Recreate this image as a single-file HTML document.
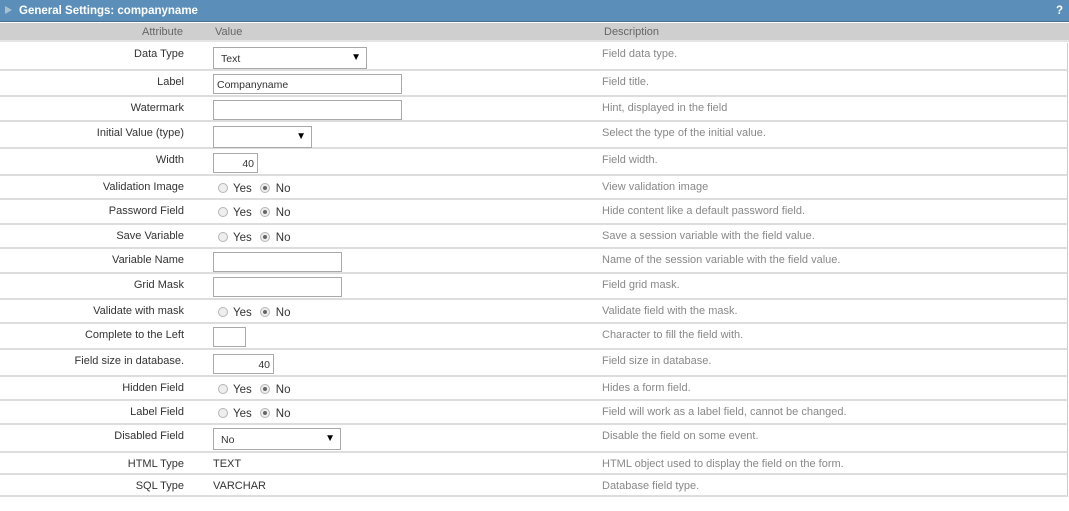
<!DOCTYPE html>
<html><head><meta charset="utf-8"><style>
*{margin:0;padding:0;box-sizing:border-box}
body{width:1069px;height:511px;background:#fff;font-family:"Liberation Sans",Arial,sans-serif;font-size:11px;color:#333;position:relative;overflow:hidden}
.hd{position:absolute;left:0;top:0;width:1069px;height:22px;background:#5b8fb9;border-bottom:1px solid #4a6f8f;color:#fff;font-weight:bold;font-size:11.5px}
.hd .t{position:absolute;left:19px;top:5px}
.hd .a{position:absolute;left:5px;top:6px;width:0;height:0;border-left:7px solid #a9bfd2;border-top:4px solid transparent;border-bottom:4px solid transparent}
.hd .q{position:absolute;right:6px;top:5px}
.gh{position:absolute;left:0;top:23px;width:1069px;height:19px;background:#cfcfcf;color:#666;border-bottom:2px solid #e4e4e4}
.gh span{position:absolute;top:3px}
.r{position:absolute;left:0;width:1068px;border-bottom:2px solid #ddd;border-right:1px solid #ccc}
.l{position:absolute;right:883px;top:5px;text-align:right;white-space:nowrap}
.v{position:absolute;left:213px;top:5px;white-space:nowrap}
.d{position:absolute;left:602px;top:5px;color:#888;white-space:nowrap}
.in{position:absolute;left:213px;top:3px;height:20px;border:1px solid #a9a9a9;background:#fff;font-size:10.5px;padding:4px 3px 0 3px}
.sel{position:absolute;left:213px;top:3px;height:22px;border:1px solid #a9a9a9;background:#fff;font-size:10.5px;padding:5px 7px}
.sel:after{content:"▼";position:absolute;right:5px;top:4px;font-size:10px;color:#000}
.rad{position:absolute;left:218px;top:7px;white-space:nowrap;font-size:11.5px}
.c{display:inline-block;width:10px;height:10px;border-radius:50%;border:1px solid #b5b5b5;background:#eee;vertical-align:-1px;position:relative}
.c.on:after{content:"";position:absolute;left:2px;top:2px;width:4px;height:4px;border-radius:50%;background:#666}
.y{margin-left:5px;margin-right:8px}
.n{margin-left:6px}
</style></head><body>
<div class="hd"><div class="a"></div><div class="t">General Settings: companyname</div><div class="q">?</div></div>
<div class="gh"><span style="left:142px">Attribute</span><span style="left:215px">Value</span><span style="left:604px">Description</span></div>

<div class="r" style="top:43px;height:28px"><div class="l">Data Type</div><div class="sel" style="width:154px;top:4px">Text</div><div class="d">Field data type.</div></div>
<div class="r" style="top:71px;height:26px"><div class="l">Label</div><div class="in" style="width:189px">Companyname</div><div class="d">Field title.</div></div>
<div class="r" style="top:97px;height:25px"><div class="l">Watermark</div><div class="in" style="width:189px"></div><div class="d">Hint, displayed in the field</div></div>
<div class="r" style="top:122px;height:27px"><div class="l">Initial Value (type)</div><div class="sel" style="width:99px;top:4px"></div><div class="d">Select the type of the initial value.</div></div>
<div class="r" style="top:149px;height:27px"><div class="l">Width</div><div class="in" style="width:45px;top:4px;text-align:right">40</div><div class="d">Field width.</div></div>
<div class="r" style="top:176px;height:24px"><div class="l">Validation Image</div><div class="rad"><span class="c"></span><span class="y">Yes</span><span class="c on"></span><span class="n">No</span></div><div class="d">View validation image</div></div>
<div class="r" style="top:200px;height:25px"><div class="l">Password Field</div><div class="rad"><span class="c"></span><span class="y">Yes</span><span class="c on"></span><span class="n">No</span></div><div class="d">Hide content like a default password field.</div></div>
<div class="r" style="top:225px;height:24px"><div class="l">Save Variable</div><div class="rad"><span class="c"></span><span class="y">Yes</span><span class="c on"></span><span class="n">No</span></div><div class="d">Save a session variable with the field value.</div></div>
<div class="r" style="top:249px;height:25px"><div class="l">Variable Name</div><div class="in" style="width:129px">&nbsp;</div><div class="d">Name of the session variable with the field value.</div></div>
<div class="r" style="top:274px;height:26px"><div class="l">Grid Mask</div><div class="in" style="width:129px">&nbsp;</div><div class="d">Field grid mask.</div></div>
<div class="r" style="top:300px;height:24px"><div class="l">Validate with mask</div><div class="rad"><span class="c"></span><span class="y">Yes</span><span class="c on"></span><span class="n">No</span></div><div class="d">Validate field with the mask.</div></div>
<div class="r" style="top:324px;height:26px"><div class="l">Complete to the Left</div><div class="in" style="width:33px">&nbsp;</div><div class="d">Character to fill the field with.</div></div>
<div class="r" style="top:350px;height:27px"><div class="l">Field size in database.</div><div class="in" style="width:61px;top:4px;text-align:right">40</div><div class="d">Field size in database.</div></div>
<div class="r" style="top:377px;height:24px"><div class="l">Hidden Field</div><div class="rad"><span class="c"></span><span class="y">Yes</span><span class="c on"></span><span class="n">No</span></div><div class="d">Hides a form field.</div></div>
<div class="r" style="top:401px;height:24px"><div class="l">Label Field</div><div class="rad"><span class="c"></span><span class="y">Yes</span><span class="c on"></span><span class="n">No</span></div><div class="d">Field will work as a label field, cannot be changed.</div></div>
<div class="r" style="top:425px;height:28px"><div class="l">Disabled Field</div><div class="sel" style="width:128px;top:3px">No</div><div class="d">Disable the field on some event.</div></div>
<div class="r" style="top:453px;height:22px"><div class="l">HTML Type</div><div class="v">TEXT</div><div class="d">HTML object used to display the field on the form.</div></div>
<div class="r" style="top:475px;height:22px"><div class="l">SQL Type</div><div class="v">VARCHAR</div><div class="d">Database field type.</div></div>
</body></html>
